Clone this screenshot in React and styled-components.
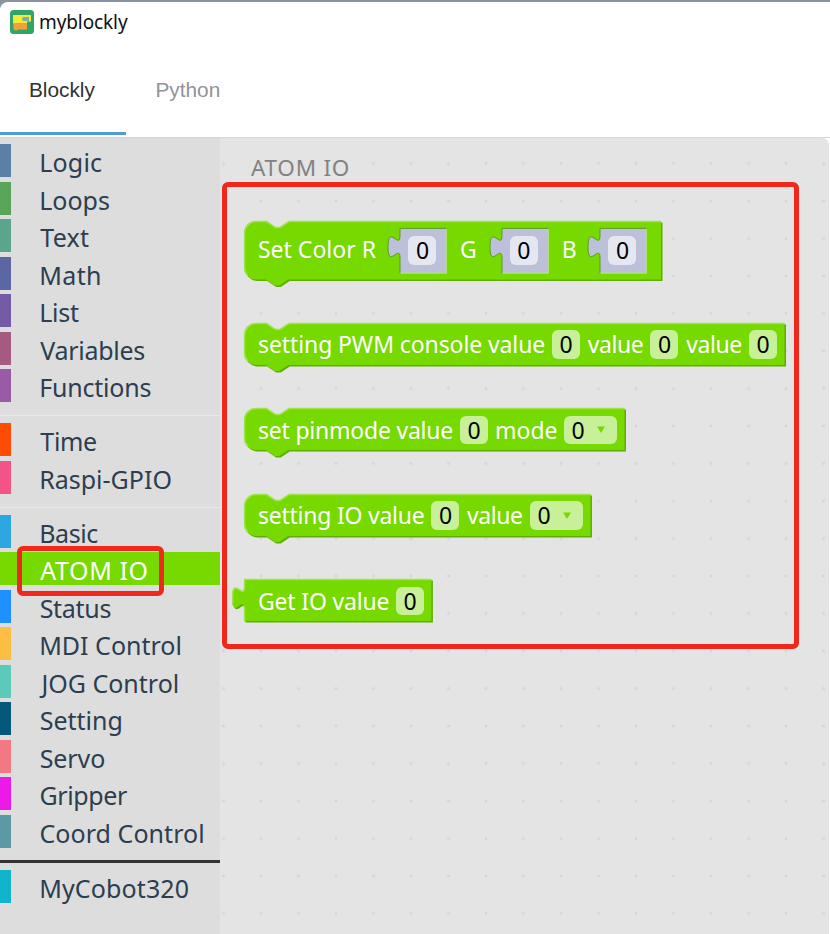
import React from "react";
import styled, { createGlobalStyle } from "styled-components";

const Global = createGlobalStyle`
  * { box-sizing: border-box; }
  body { margin: 0; background: #fff; overflow: hidden; }
`;

const sans = `"Noto Sans", "Open Sans", sans-serif`;

const Window = styled.div`
  position: relative;
  width: 830px;
  height: 934px;
  display: flex;
  flex-direction: column;
  overflow: hidden;
  background: #fff;
  font-family: ${sans};
`;
const Desktop = styled.div`
  flex: none;
  height: 8px;
  margin-bottom: -8px;
  background: #8b92a2;
`;
const TitleBar = styled.header`
  flex: none;
  display: flex;
  align-items: center;
  height: 40px;
  margin-top: 2px;
  padding: 0 0 0 10px;
  gap: 4px;
  background: #fff;
  border-top-left-radius: 8px;
  position: relative;
`;
const Title = styled.span`
  font-size: 19px;
  line-height: 24px;
  letter-spacing: -0.1px;
  color: #111;
`;
const Tabs = styled.nav`
  flex: none;
  display: flex;
  height: 96px;
  border-bottom: 1px solid #d4d7da;
`;
const Tab = styled.div`
  height: 93px;
  width: ${(p) => p.$w}px;
  padding: 36px 0 0 ${(p) => p.$pad}px;
  font-family: "Liberation Sans", Arial, sans-serif;
  font-size: 20.8px;
  line-height: 24px;
  color: ${(p) => (p.$active ? "#303133" : "#909399")};
  border-bottom: ${(p) => (p.$active ? "3px solid #4f9cd2" : "0")};
`;
const Body = styled.main`
  flex: 1;
  display: flex;
  min-height: 0;
`;
const Sidebar = styled.aside`
  display: flex;
  flex-direction: column;
  width: 220px;
  padding-top: 6px;
  background: #ddd;
`;
const Category = styled.div`
  flex: none;
  height: 33px;
  margin-bottom: 4.5px;
  padding-left: ${(p) => 29.5 + p.$x}px;
  border-left: 11px solid ${(p) => p.$color};
  background: ${(p) => (p.$selected ? p.$color : "transparent")};
  color: ${(p) => (p.$selected ? "#fff" : "#2c3e50")};
  font-size: 25px;
  line-height: 37.5px;
  letter-spacing: ${(p) => p.$ls}px;
  white-space: nowrap;
`;
const Separator = styled.hr`
  flex: none;
  width: 100%;
  height: 1px;
  margin: 8.5px 0 7px;
  border: 0;
  background: #e9e9e9;
`;
const StrongSeparator = styled.hr`
  flex: none;
  width: 100%;
  height: 3px;
  margin: 8px 0 7px;
  border: 0;
  background: #333;
`;
const Flyout = styled.section`
  flex: 1;
  margin-right: 1px;
  padding: 17px 0 0 23.6px;
  border-top-right-radius: 7px;
  background-color: #e4e4e4;
  background-image: radial-gradient(circle, #d6d6d9 1.1px, transparent 1.9px);
  background-size: 37.5px 37.5px;
  background-position: -15.25px 6.75px;
`;
const FlyoutLabel = styled.h2`
  margin: 1px 0 40.5px 7.4px;
  font-size: 22.5px;
  font-weight: 400;
  line-height: 24px;
  letter-spacing: 0.75px;
  color: #828282;
`;
const Stack = styled.div`
  display: flex;
  flex-direction: column;
  gap: 43.5px;
`;
const BlockBox = styled.div`
  position: relative;
  display: flex;
  align-items: flex-start;
  width: ${(p) => p.$w}px;
  height: ${(p) => p.$h}px;
  padding: 7.5px 0 0 14.4px;
`;
const Outline = styled.svg`
  position: absolute;
  inset: 0;
  width: 100%;
  height: 100%;
  overflow: visible;
`;
const Label = styled.span`
  position: relative;
  flex: none;
  width: ${(p) => p.$w}px;
  padding-left: ${(p) => p.$pad || 0}px;
  margin-top: ${(p) => p.$top || 0}px;
  font-size: 23px;
  line-height: 28.5px;
  letter-spacing: ${(p) => p.$ls || 0}px;
  white-space: nowrap;
  color: #fff;
`;
const Field = styled.span`
  position: relative;
  flex: none;
  display: flex;
  align-items: center;
  width: ${(p) => (p.$menu ? 53 : 28)}px;
  height: 28.5px;
  padding-left: 7.5px;
  border-radius: 6px;
  background: rgba(255, 255, 255, 0.6);
  font-size: 23px;
  line-height: 28.5px;
  color: #000;
`;
const Caret = styled.svg`
  width: 8px;
  height: 7px;
  margin-left: 12.5px;
`;
const NumberBlock = styled.span`
  position: relative;
  flex: none;
  width: 46.5px;
  height: 45.5px;
  padding: 8px;
`;
const Highlight = styled.div`
  position: absolute;
  left: ${(p) => p.$x}px;
  top: ${(p) => p.$y}px;
  width: ${(p) => p.$w}px;
  height: ${(p) => p.$h}px;
  border: 5px solid #f0271b;
  border-radius: 6px;
  pointer-events: none;
`;

const GREEN = "#76d900";

const statementPath = (w, h) =>
  `M0,12 A12,12 0 0,1 12,0 H22.5 l9,6 4.5,0 9,-6 H${w} V${h} H44.25 l-9,6 -4.5,0 -9,-6 H12 A12,12 0 0,1 0,${h - 12} Z`;
const statementLight = (w, h) =>
  `M3.9,${h - 3.9} A11.5,11.5 0 0,1 .6,${h - 12} V12 A11.5,11.5 0 0,1 12,.6 H22.5 l9,6 4.5,0 9,-6 H${w - 0.6}`;
const valuePath = (w, h) =>
  `M0,0 H${w} V${h} H0 V30 c0,-15 -12,12 -12,-11.25 s12,3.75 12,-11.25 Z`;
const valueLight = (w, h) =>
  `M.6,${h - 0.6} V28 M-10.6,24 C-11.6,22 -11.4,20 -11.4,18.75 C-11.4,-4 .6,22.5 .6,7.5 V.6 H${w - 0.6}`;

function Block({ w, h = 42, output, children }) {
  const d = output ? valuePath(w, h) : statementPath(w, h);
  return (
    <BlockBox $w={w} $h={h}>
      <Outline>
        <path d={d} fill="#5eae00" transform="translate(1.5 1.5)" />
        <path d={d} fill={GREEN} />
        <path d={output ? valueLight(w, h) : statementLight(w, h)} fill="none" stroke="#9fe44d" strokeWidth="1.5" />
      </Outline>
      {children}
    </BlockBox>
  );
}

function NumberInput({ value }) {
  return (
    <NumberBlock>
      <Outline>
        <path d={valuePath(46.5, 45)} fill="#bcc1d9" />
        <path
          d="M0,45 V30 c0,-15 -12,12 -12,-11.25 s12,3.75 12,-11.25 V.4 H46.5"
          fill="none"
          stroke="#5c9a1c"
          strokeWidth="1"
        />
        <path d="M.6,45.2 H46.2 V1" fill="none" stroke="#b4df83" strokeWidth="1.3" />
      </Outline>
      <Field>{value}</Field>
    </NumberBlock>
  );
}

function Dropdown({ value }) {
  return (
    <Field $menu>
      {value}
      <Caret viewBox="0 0 8 7">
        <path d="M0,.5 H8 L4,7 Z" fill={GREEN} />
      </Caret>
    </Field>
  );
}

function Logo() {
  return (
    <svg width="25" height="24" viewBox="0 0 25 24">
      <rect width="24" height="24" rx="3.5" fill="#2fa567" />
      <path d="M3,5 H21 V11.5 H17 V13.5 H3 Z" fill="#f3ea3e" />
      <path d="M13,7 h6 v4 h-6 l-1.2,-2 Z" fill="#7fae9c" />
      <path d="M3.5,13 H6 l1,1 h2 l1,-1 H17 V19.5 H8 l-1,1 H5 l-.5,-1 H3.5 Z" fill="#f79e3c" />
    </svg>
  );
}

const groups = [
  [
    ["Logic", "#5b80a5", -1.3, 0.2],
    ["Loops", "#5ba55b", -1.3, 0],
    ["Text", "#5ba58c", -0.2, 0.25],
    ["Math", "#5b67a5", -1.3, 0.4],
    ["List", "#745ba5", -1.3, -0.2],
    ["Variables", "#a55b80", -0.3, -0.27],
    ["Functions", "#995ba5", -1.3, -0.2],
  ],
  [
    ["Time", "#ff4b05", -0.2, -0.3],
    ["Raspi-GPIO", "#f25488", -1.3, 0],
  ],
  [
    ["Basic", "#2ea7e0", -1.3, -0.4],
    ["ATOM IO", GREEN, -0.3, 0.6],
    ["Status", "#1e90ff", -0.8, -0.3],
    ["MDI Control", "#fdbe44", -1.3, 0],
    ["JOG Control", "#5bcabb", 0.9, 0],
    ["Setting", "#04587a", -0.8, 0],
    ["Servo", "#f27983", -0.8, -0.1],
    ["Gripper", "#eb1ae6", -1, -0.4],
    ["Coord Control", "#5b9aa5", -1, 0.05],
  ],
  [["MyCobot320", "#11b5cb", -1.3, 0.12]],
];

export default function App() {
  return (
    <Window>
      <Global />
      <Desktop />
      <TitleBar>
        <Logo />
        <Title>myblockly</Title>
      </TitleBar>
      <Tabs>
        <Tab $active $w={126} $pad={29}>Blockly</Tab>
        <Tab $w={125} $pad={29.5}>Python</Tab>
      </Tabs>
      <Body>
        <Sidebar>
          {groups.map((items, g) => (
            <React.Fragment key={g}>
              {g > 0 && (g === 3 ? <StrongSeparator /> : <Separator />)}
              {items.map(([name, color, x, ls]) => (
                <Category key={name} $color={color} $x={x} $ls={ls} $selected={name === "ATOM IO"}>
                  {name}
                </Category>
              ))}
            </React.Fragment>
          ))}
        </Sidebar>
        <Flyout>
          <FlyoutLabel>ATOM IO</FlyoutLabel>
          <Stack>
            <Block w={417} h={58.5}>
              <Label $w={142.5} $top={6.5}>Set Color R</Label>
              <NumberInput value="0" />
              <Label $w={54.7} $pad={13} $top={6.5}>G</Label>
              <NumberInput value="0" />
              <Label $w={52.3} $pad={13.5} $top={6.5}>B</Label>
              <NumberInput value="0" />
            </Block>
            <Block w={540.5}>
              <Label $w={294} $ls={-0.1}>setting PWM console value</Label>
              <Field>0</Field>
              <Label $w={70.5} $pad={7.7} $ls={-0.4}>value</Label>
              <Field>0</Field>
              <Label $w={70.5} $pad={7.7} $ls={-0.4}>value</Label>
              <Field>0</Field>
            </Block>
            <Block w={380.5}>
              <Label $w={202} $ls={-0.22}>set pinmode value</Label>
              <Field>0</Field>
              <Label $w={76} $pad={7}>mode</Label>
              <Dropdown value="0" />
            </Block>
            <Block w={346.5}>
              <Label $w={173.5} $ls={-0.24}>setting IO value</Label>
              <Field>0</Field>
              <Label $w={70.5} $pad={7.5} $ls={-0.4}>value</Label>
              <Dropdown value="0" />
            </Block>
            <Block w={187.4} output>
              <Label $w={138} $ls={-0.18}>Get IO value</Label>
              <Field>0</Field>
            </Block>
          </Stack>
        </Flyout>
      </Body>
      <Highlight $x={222} $y={182} $w={577} $h={467} />
      <Highlight $x={17} $y={546} $w={147} $h={50} />
    </Window>
  );
}
